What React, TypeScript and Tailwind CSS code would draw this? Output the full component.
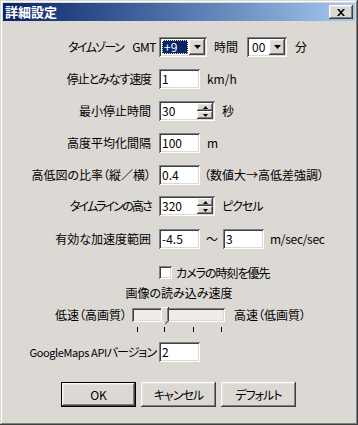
import React from "react";

const raised =
  "shadow-[inset_-1px_-1px_#404040,inset_1px_1px_#ffffff,inset_-2px_-2px_#808080,inset_2px_2px_#e8e5e1]";
const sunken =
  "shadow-[inset_1px_1px_#808080,inset_-1px_-1px_#ffffff,inset_2px_2px_#404040,inset_-2px_-2px_#dcd9d5]";
const palt = "[font-feature-settings:'palt']";

function DownArrow() {
  return (
    <svg width="7" height="4" viewBox="0 0 7 4">
      <path d="M0 0H7L3.5 4Z" fill="#000" />
    </svg>
  );
}

function TextField({ value, w }: { value: string; w: string }) {
  return (
    <div className={`${w} h-[20px] bg-white ${sunken} pl-[3px] flex items-center leading-[16px]`}>
      {value}
    </div>
  );
}

function SpinField({ value }: { value: string }) {
  return (
    <div className={`w-[56px] h-[20px] bg-white ${sunken} flex items-stretch p-[2px]`}>
      <div className="flex-1 pl-[1px] flex items-center leading-[16px]">{value}</div>
      <div className="w-[16px] flex flex-col">
        <div className={`h-[8px] bg-[#dcd9d5] ${raised} flex items-center justify-center`}>
          <svg width="5" height="3" viewBox="0 0 5 3">
            <path d="M2.5 0L5 3H0Z" fill="#000" />
          </svg>
        </div>
        <div className={`h-[8px] bg-[#dcd9d5] ${raised} flex items-center justify-center`}>
          <svg width="5" height="3" viewBox="0 0 5 3">
            <path d="M0 0H5L2.5 3Z" fill="#000" />
          </svg>
        </div>
      </div>
    </div>
  );
}

function Combo({ value, w, selected }: { value: string; w: string; selected?: boolean }) {
  return (
    <div className={`${w} h-[20px] bg-white ${sunken} flex p-[2px]`}>
      <div className="flex-1 flex p-[1px] pr-[1px]">
        {selected ? (
          <div className="flex-1 bg-[#0a246a] text-white border border-dotted border-[#f3f3b0] pl-[1px] flex items-center leading-[14px]">
            {value}
          </div>
        ) : (
          <div className="flex-1 pl-[2px] flex items-center leading-[14px]">{value}</div>
        )}
      </div>
      <div className={`w-[16px] h-[16px] bg-[#dcd9d5] ${raised} flex items-center justify-center`}>
        <DownArrow />
      </div>
    </div>
  );
}

function Label({ children, cls }: { children: React.ReactNode; cls?: string }) {
  return (
    <div className={`w-[148px] text-right whitespace-nowrap ${palt} ${cls ?? ""}`}>{children}</div>
  );
}

function Button({ children, def }: { children: React.ReactNode; def?: boolean }) {
  if (def) {
    return (
      <div className="w-[75px] h-[25px] border border-black bg-[#dcd9d5]">
        <div className={`w-full h-full ${raised} flex items-center justify-center ${palt}`}>{children}</div>
      </div>
    );
  }
  return (
    <div className={`w-[75px] h-[25px] bg-[#dcd9d5] ${raised} flex items-center justify-center ${palt} tracking-[-1px]`}>
      {children}
    </div>
  );
}

export default function App() {
  return (
    <div
      className={`w-[358px] h-[425px] bg-[#dcd9d5] p-[3px] flex flex-col text-black text-[12px] leading-[14px] font-['Noto_Sans_CJK_JP',sans-serif] shadow-[inset_-1px_-1px_#404040,inset_1px_1px_#dcd9d5,inset_-2px_-2px_#808080,inset_2px_2px_#ffffff]`}
    >
      {/* title bar */}
      <div className="h-[18px] flex items-center justify-between bg-linear-to-r from-[#0a246a] to-[#a6caf0] pl-[2px] pr-[2px]">
        <span className="text-white font-bold text-[13px] leading-[18px]">詳細設定</span>
        <div className={`w-[24px] h-[14px] bg-[#dcd9d5] ${raised} flex items-center justify-center`}>
          <svg width="8" height="7" viewBox="0 0 8 7">
            <path d="M0 0H2L4 2.3L6 0H8L5 3.5L8 7H6L4 4.7L2 7H0L3 3.5Z" fill="#000" />
          </svg>
        </div>
      </div>

      {/* row 1 */}
      <div className="mt-[16px] h-[20px] flex items-center">
        <div className={`w-[153px] flex justify-end gap-[9px] whitespace-nowrap ${palt}`}>
          <span className="tracking-[-1.6px]">タイムゾーン</span>
          <span className="tracking-[-0.5px]">GMT</span>
        </div>
        <div className="ml-[3px]">
          <Combo value="+9" w="w-[48px]" selected />
        </div>
        <span className="ml-[7px]">時間</span>
        <div className="ml-[9px]">
          <Combo value="00" w="w-[40px]" />
        </div>
        <span className="ml-[8px]">分</span>
      </div>

      {/* row 2 */}
      <div className="mt-[12px] h-[20px] flex items-center">
        <Label cls="tracking-[-1.1px]">停止とみなす速度</Label>
        <div className="ml-[8px]">
          <TextField value="1" w="w-[41px]" />
        </div>
        <span className="ml-[7px]">km/h</span>
      </div>

      {/* row 3 */}
      <div className="mt-[12px] h-[20px] flex items-center">
        <Label>最小停止時間</Label>
        <div className="ml-[8px]">
          <SpinField value="30" />
        </div>
        <span className="ml-[7px]">秒</span>
      </div>

      {/* row 4 */}
      <div className="mt-[12px] h-[20px] flex items-center">
        <Label>高度平均化間隔</Label>
        <div className="ml-[8px]">
          <TextField value="100" w="w-[41px]" />
        </div>
        <span className="ml-[7px]">m</span>
      </div>

      {/* row 5 */}
      <div className="mt-[12px] h-[20px] flex items-center">
        <Label>高低図の比率（縦／横）</Label>
        <div className="ml-[8px]">
          <TextField value="0.4" w="w-[41px]" />
        </div>
        <span className={`ml-[4px] whitespace-nowrap ${palt}`}>（数値大→高低差強調）</span>
      </div>

      {/* row 6 */}
      <div className="mt-[11px] h-[20px] flex items-center">
        <Label cls="tracking-[-1.8px]">タイムラインの高さ</Label>
        <div className="ml-[8px]">
          <SpinField value="320" />
        </div>
        <span className={`ml-[7px] ${palt} tracking-[-1px]`}>ピクセル</span>
      </div>

      {/* row 7 */}
      <div className="mt-[13px] h-[20px] flex items-center">
        <Label>有効な加速度範囲</Label>
        <div className="ml-[8px]">
          <TextField value="-4.5" w="w-[41px]" />
        </div>
        <span className="ml-[6px]">～</span>
        <div className="ml-[5px]">
          <TextField value="3" w="w-[41px]" />
        </div>
        <span className="ml-[6px] tracking-[-0.3px]">m/sec/sec</span>
      </div>

      {/* checkbox */}
      <div className="mt-[17px] h-[13px] flex items-center">
        <div className={`ml-[156px] w-[13px] h-[13px] bg-white ${sunken}`} />
        <span className={`ml-[4px] ${palt} tracking-[-1px]`}>カメラの時刻を優先</span>
      </div>

      {/* slider title */}
      <div className={`mt-[7px] h-[14px] text-center ${palt}`}>画像の読み込み速度</div>

      {/* slider row */}
      <div className="mt-[5px] h-[20px] flex items-center">
        <div className={`w-[124px] text-right whitespace-nowrap ${palt}`}>低速（高画質）</div>
        <div className="ml-[5px] relative w-[93px] h-[20px]">
          <div className={`absolute left-0 top-[3px] w-[93px] h-[14px] bg-[#efedea] ${sunken}`} />
          <svg className="absolute left-[29px] top-[2px]" width="8" height="18" viewBox="0 0 8 18">
            <path d="M0 0H8V14L4 18L0 14Z" fill="#dcd9d5" />
            <path d="M0.5 14V0.5H7" stroke="#ffffff" strokeWidth="1" fill="none" />
            <path d="M7.5 0V14L4 17.5" stroke="#404040" strokeWidth="1" fill="none" />
            <path d="M6.5 1V13.6L4 16.2" stroke="#808080" strokeWidth="1" fill="none" />
            <path d="M0.5 14L3.5 17" stroke="#ffffff" strokeWidth="1" fill="none" />
          </svg>
        </div>
        <div className={`ml-[9px] whitespace-nowrap ${palt}`}>高速（低画質）</div>
      </div>

      {/* ticks */}
      <div className="mt-[2px] h-[5px] flex">
        <svg className="ml-[129px]" width="93" height="5" viewBox="0 0 93 5">
          <rect x="5" y="0" width="1" height="5" fill="#000" />
          <rect x="32" y="0" width="1" height="5" fill="#000" />
          <rect x="61" y="0" width="1" height="5" fill="#000" />
          <rect x="89" y="0" width="1" height="5" fill="#000" />
        </svg>
      </div>

      {/* google maps */}
      <div className="mt-[10px] h-[20px] flex items-center">
        <div className={`w-[153px] text-right whitespace-nowrap ${palt}`}>
          <span className="text-[11px] tracking-[-0.4px]">GoogleMaps API</span>
          <span className="tracking-[-1px]">バージョン</span>
        </div>
        <div className="ml-[3px]">
          <TextField value="2" w="w-[41px]" />
        </div>
      </div>

      {/* buttons */}
      <div className="mt-[20px] flex justify-center gap-[5px] pr-[1px]">
        <Button def>OK</Button>
        <Button>キャンセル</Button>
        <Button>デフォルト</Button>
      </div>
    </div>
  );
}
